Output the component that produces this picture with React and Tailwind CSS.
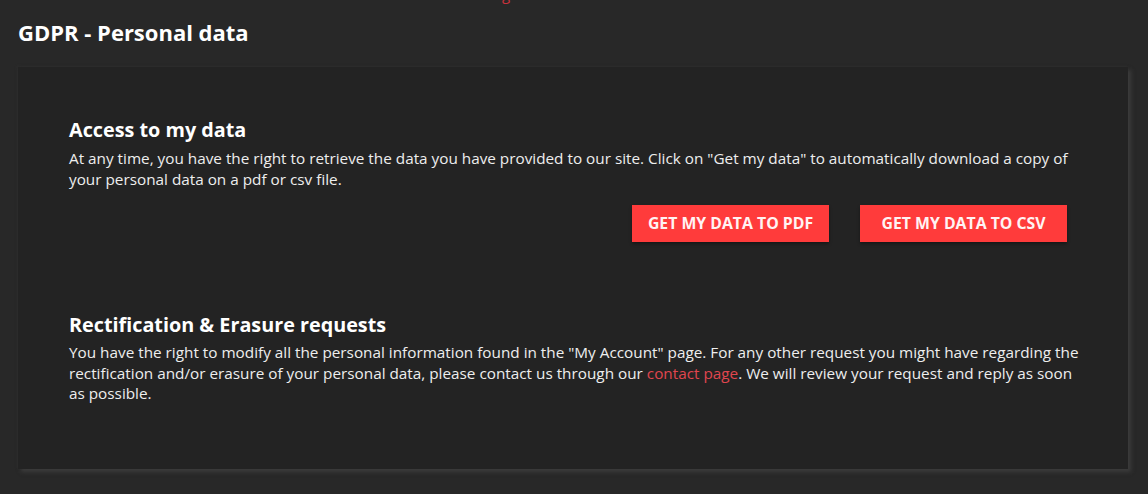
import React from "react";

const font = { fontFamily: '"Open Sans", "Noto Sans", sans-serif' };

const App = () => {
  return (
    <div className="min-h-[494px] w-full bg-[#282828] text-white overflow-hidden" style={font}>
      {/* cut-off red text from above */}
      <div className="flex h-0 pl-[502px]">
        <span className="-mt-[15px] text-[15px] text-[#c8323c] leading-[18px]">g</span>
      </div>

      <div className="pt-[17px] pl-[18px]">
        <h1 className="text-[22px] font-bold leading-[30px] text-white">GDPR - Personal data</h1>
      </div>

      <div className="mt-[20px] ml-[18px] mr-[20px] h-[402px] bg-[#232323] shadow-[3px_3px_4px_#3c3c3c,-1px_-1px_2px_#2e2e2e]">
        <div className="pl-[51px] pr-[38px] pt-[49px]">
          <h2 className="text-[19.8px] font-bold leading-[28px] text-white">Access to my data</h2>
          <p className="text-[15.3px] leading-[21px] text-[#eeeeee] mt-[4px]">
            At any time, you have the right to retrieve the data you have provided to our site. Click on "Get my data" to automatically download a copy of your personal data on a pdf or csv file.
          </p>
          <div className="flex justify-end gap-[31px] mt-[15px] pr-[23px]">
            <button className="w-[197px] h-[37px] bg-[#ff3b3b] text-[#fff3f3] text-[15.8px] font-bold uppercase shadow-[0_2px_3px_rgba(0,0,0,0.35)]">
              Get my data to PDF
            </button>
            <button className="w-[207px] h-[37px] bg-[#ff3b3b] text-[#fff3f3] text-[15.8px] font-bold uppercase shadow-[0_2px_3px_rgba(0,0,0,0.35)]">
              Get my data to CSV
            </button>
          </div>

          <h2 className="mt-[69px] text-[19.8px] font-bold leading-[28px] text-white">Rectification &amp; Erasure requests</h2>
          <p className="text-[15.3px] leading-[20.5px] text-[#eeeeee] mt-[3px]">
            You have the right to modify all the personal information found in the "My Account" page. For any other request you might have regarding the rectification and/or erasure of your personal data, please contact us through our{" "}
            <a className="text-[#e0464f]">contact page</a>. We will review your request and reply as soon as possible.
          </p>
        </div>
      </div>
    </div>
  );
};

export default App;
